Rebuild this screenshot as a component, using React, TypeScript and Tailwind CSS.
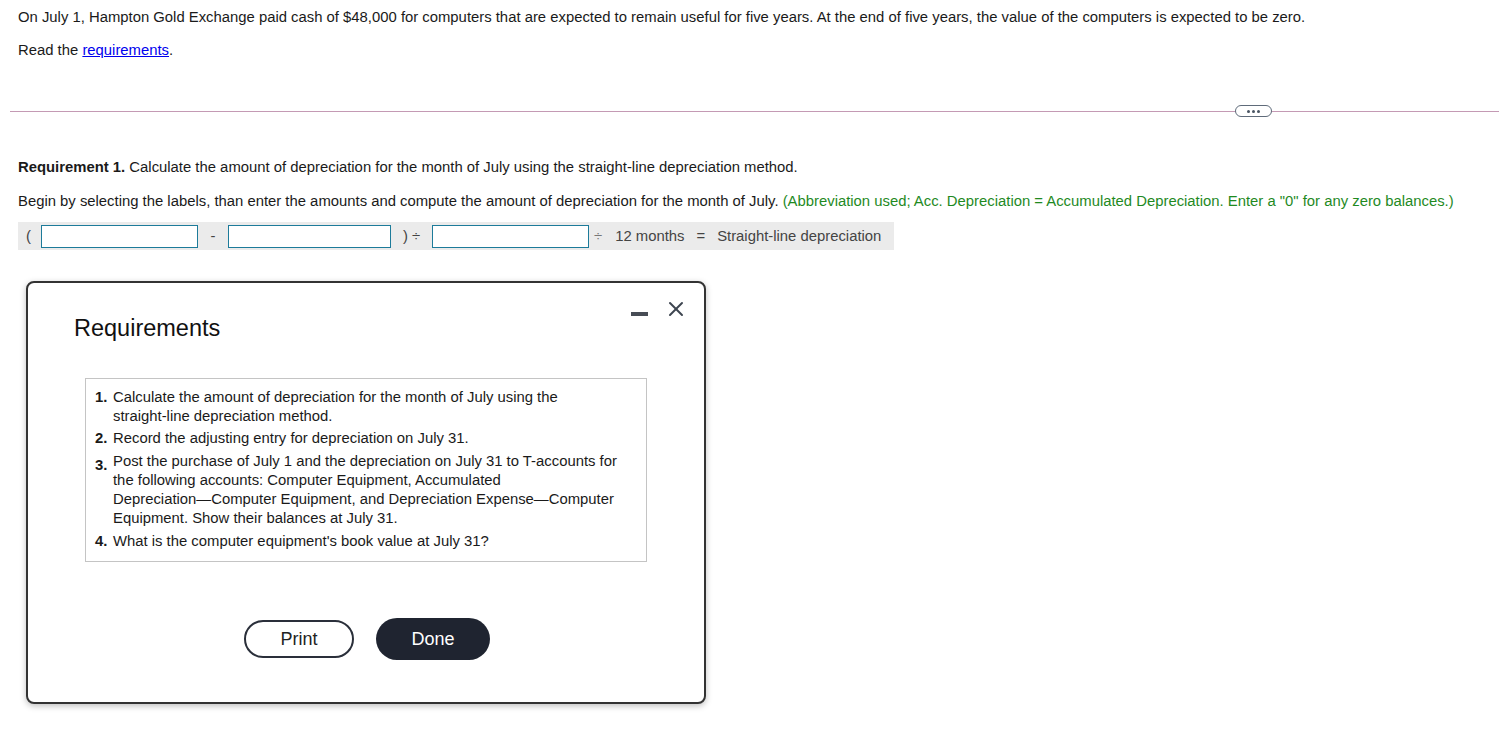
import { X } from "lucide-react";

const font = { fontFamily: '"Liberation Sans", Arial, sans-serif' };

const Box = ({ w }: { w: string }) => (
  <div className={`${w} h-[23px] border border-[#1d7b9a] bg-white`} />
);

export default function App() {
  return (
    <div style={font} className="min-h-[732px] bg-white text-[14.85px] text-[#1a1a1a] relative">
      <div className="pl-[18px] pt-[9px]">
        <p className="leading-[17px]">
          On July 1, Hampton Gold Exchange paid cash of $48,000 for computers that are expected to remain useful for five years. At the end of five years, the value of the computers is expected to be zero.
        </p>
        <p className="leading-[17px] mt-[16px]">
          Read the <span className="text-[#0000ee] underline">requirements</span>.
        </p>
      </div>

      {/* divider with pill */}
      <div className="mt-[52px] ml-[10px] flex items-center">
        <div className="h-px flex-1 bg-[#c49ab4]" />
      </div>
      <div className="absolute left-[1235px] top-[105px] w-[37px] h-[12px] rounded-full border border-[#5f6b7a] bg-white flex items-center justify-center gap-[2px]">
        <span className="w-[3px] h-[3px] bg-[#4a5563] rounded-full" />
        <span className="w-[3px] h-[3px] bg-[#4a5563] rounded-full" />
        <span className="w-[3px] h-[3px] bg-[#4a5563] rounded-full" />
      </div>

      <div className="pl-[18px] pt-[47px]">
        <p className="leading-[17px]">
          <span className="font-bold">Requirement 1.</span> Calculate the amount of depreciation for the month of July using the straight-line depreciation method.
        </p>
        <p className="leading-[17px] mt-[17px]">
          Begin by selecting the labels, than enter the amounts and compute the amount of depreciation for the month of July.{" "}
          <span className="text-[#1f8a1f]">(Abbreviation used; Acc. Depreciation = Accumulated Depreciation. Enter a "0" for any zero balances.)</span>
        </p>
        <div className="mt-[12px] w-[876px] h-[28px] bg-[#ebebeb] flex items-center text-[#444] pl-[8px]">
          <span className="w-[15px]">(</span>
          <Box w="w-[157px]" />
          <span className="w-[30px] text-center">-</span>
          <Box w="w-[163px]" />
          <span className="w-[41px] text-center">) ÷</span>
          <Box w="w-[157px]" />
          <span className="ml-[5px] text-[#777]">÷</span>
          <span className="ml-[13px]">12 months</span>
          <span className="ml-[12px]">=</span>
          <span className="ml-[12px]">Straight-line depreciation</span>
        </div>
      </div>

      {/* requirements modal */}
      <div className="absolute left-[26px] top-[281px] w-[680px] h-[423px] border-2 border-[#333] rounded-[8px] bg-white shadow-[0_2px_6px_rgba(0,0,0,0.25)]">
        <div className="absolute right-[56px] top-[29px] w-[17px] h-[4px] bg-[#474c55]" />
        <X className="absolute right-[16px] top-[14px] w-[24px] h-[24px] text-[#3d4550]" strokeWidth={2} />
        <div className="pl-[46px] pt-[32px] text-[23.5px] leading-[27px] text-[#111]">Requirements</div>
        <div className="ml-[57px] mt-[36px] w-[562px] border border-[#c4c4c4] pl-[9px] pr-[10px] pt-[9px] pb-[10px] text-[14.85px] leading-[19px]">
          <div className="flex">
            <span className="w-[18px] font-bold">1.</span>
            <span className="flex-1">Calculate the amount of depreciation for the month of July using the <span className="whitespace-nowrap">straight-line</span> depreciation method.</span>
          </div>
          <div className="flex mt-[3px]">
            <span className="w-[18px] font-bold">2.</span>
            <span className="flex-1">Record the adjusting entry for depreciation on July 31.</span>
          </div>
          <div className="flex mt-[4px]">
            <span className="w-[18px] font-bold pt-[4px]">3.</span>
            <span className="flex-1">Post the purchase of July 1 and the depreciation on July 31 to T-accounts for the following accounts: Computer Equipment, Accumulated <span className="whitespace-nowrap">Depreciation—Computer</span> Equipment, and Depreciation <span className="whitespace-nowrap">Expense—Computer</span> Equipment. Show their balances at July 31.</span>
          </div>
          <div className="flex mt-[4px]">
            <span className="w-[18px] font-bold">4.</span>
            <span className="flex-1">What is the computer equipment's book value at July 31?</span>
          </div>
        </div>
        <div className="flex items-center gap-[22px] ml-[216px] mt-[56px]">
          <button className="w-[110px] h-[38px] rounded-full border-2 border-[#2a2f3a] bg-white text-[18px] text-[#222]">Print</button>
          <button className="w-[114px] h-[42px] rounded-full bg-[#1f2430] text-white text-[18px]">Done</button>
        </div>
      </div>
    </div>
  );
}
